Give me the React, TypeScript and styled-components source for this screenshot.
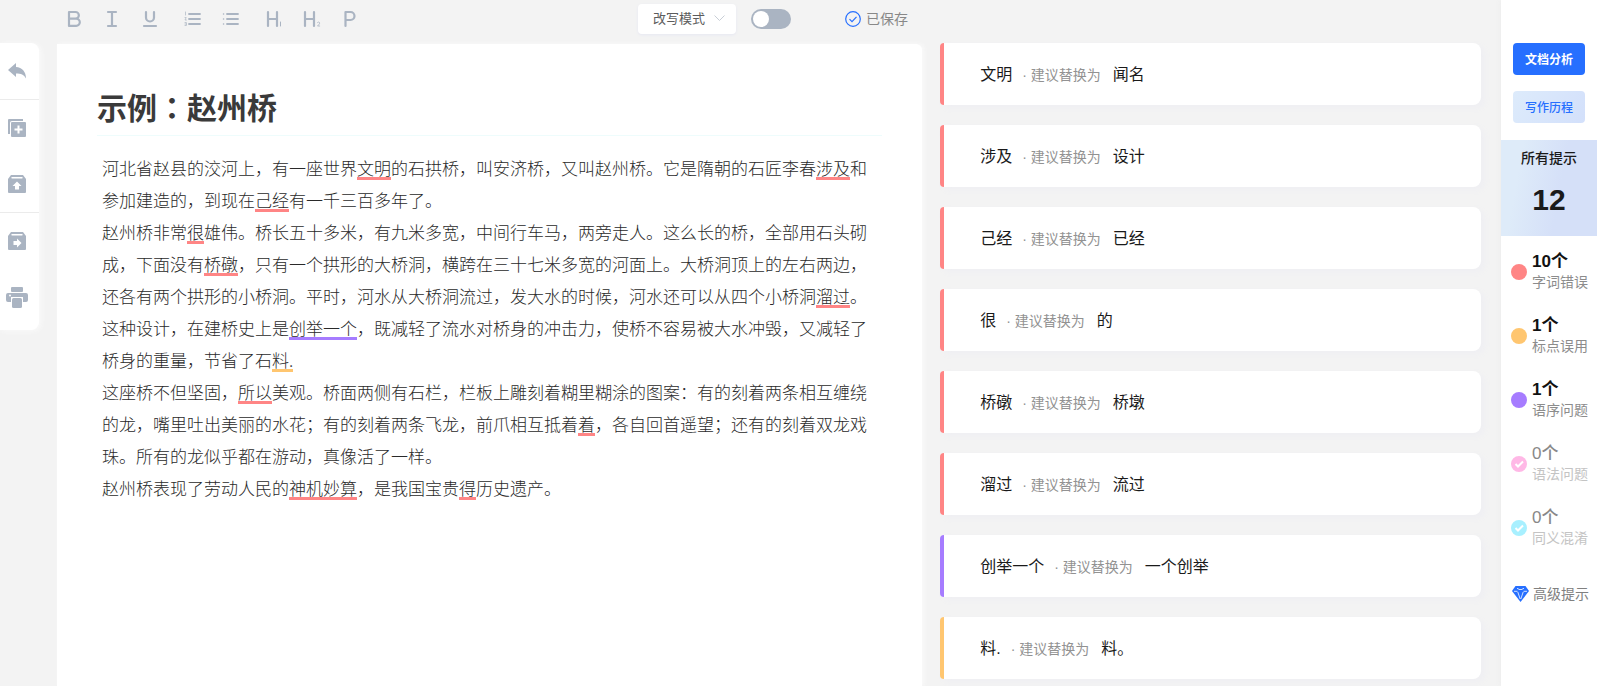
import React from 'react';
import styled, { createGlobalStyle, css } from 'styled-components';

const colors = {
  red: '#ff8585',
  orange: '#ffc670',
  purple: '#a67cff',
  pink: '#ffb8e6',
  cyan: '#a8f0ff',
  blue: '#266fff',
  icon: '#aab4c2',
};

const GlobalStyle = createGlobalStyle`
  * { box-sizing: border-box; }
  body {
    margin: 0;
    background: #f3f3f3;
    font-family: "Liberation Sans", "Noto Sans CJK SC", sans-serif;
  }
  button, select { font-family: inherit; }
  h1, h2, p, ul { margin: 0; padding: 0; }
  ul { list-style: none; }
`;

const Page = styled.div`
  display: flex;
  height: 100vh;
  overflow: hidden;
`;

const Workspace = styled.div`
  flex: 1;
  min-width: 0;
  display: flex;
  flex-direction: column;
`;

const Toolbar = styled.header`
  display: flex;
  align-items: center;
  height: 43px;
  padding-bottom: 6px;
  flex: none;
`;

const Formatting = styled.div`
  flex: 0 0 42.5%;
  display: flex;
  gap: 5px;
  padding-left: 55px;
`;

const ToolGroup = styled.div`
  display: flex;
`;

const ToolButton = styled.button`
  display: flex;
  align-items: center;
  justify-content: center;
  width: 38px;
  height: 32px;
  padding: 0;
  border: 0;
  background: none;
  color: ${colors.icon};
  cursor: pointer;
`;

const ModeBox = styled.div`
  display: flex;
  align-items: center;
  position: relative;
  margin-right: 15px;
`;

const ModeSelect = styled.select`
  appearance: none;
  width: 98px;
  height: 30px;
  padding: 0 28px 0 15px;
  border: 0;
  border-radius: 4px;
  background: #fff;
  box-shadow: 0 1px 3px #e6e8f2;
  color: #5c5c5c;
  font-size: 13px;
`;

const Chevron = styled.svg`
  position: absolute;
  right: 11px;
  pointer-events: none;
`;

const Toggle = styled.input`
  appearance: none;
  display: flex;
  align-items: center;
  width: 40px;
  height: 20px;
  margin: 0 54px 0 0;
  padding: 2px;
  border-radius: 10px;
  background: ${colors.icon};
  cursor: pointer;
  &::before {
    content: '';
    width: 16px;
    height: 16px;
    border-radius: 50%;
    background: #fff;
  }
  &:checked {
    justify-content: flex-end;
    background: ${colors.blue};
  }
`;

const SaveState = styled.div`
  display: flex;
  align-items: center;
  gap: 5px;
  color: #888;
  font-size: 14px;
  line-height: 20px;
`;

const Columns = styled.div`
  flex: 1;
  min-height: 0;
  display: flex;
`;

const Rail = styled.nav`
  align-self: flex-start;
  flex: none;
  width: 39px;
  margin-right: 18px;
  padding-bottom: 5px;
  border-radius: 0 8px 8px 0;
  background: #fff;
  box-shadow: 2px 1px 5px #fafafa;
`;

const RailGroup = styled.div`
  display: flex;
  flex-direction: column;
  & + & { border-top: 1px solid #ebebeb; }
`;

const RailButton = styled.button`
  display: flex;
  align-items: center;
  justify-content: center;
  width: 34px;
  height: 56px;
  padding: 0;
  border: 0;
  background: none;
  color: ${colors.icon};
  cursor: pointer;
`;

const Content = styled.main`
  flex: 1;
  min-width: 0;
  display: grid;
  grid-template-columns: 8fr 5fr;
  gap: 18px;
  padding-right: 20px;
`;

const Editor = styled.article`
  margin-top: 1px;
  padding: 40px;
  background: #fff;
  border-radius: 0 6px 0 0;
  box-shadow: 2px 0 4px #fafafa;
`;

const Title = styled.h1`
  padding-bottom: 4px;
  border-bottom: 1px solid #eefcfc;
  color: #3a3a3a;
  font-size: 30px;
  line-height: 44px;
`;

const Colon = styled.span`
  font-family: "Noto Sans CJK TC", sans-serif;
`;

const Body = styled.div`
  padding: 16px 5px;
  color: #2a2a2a;
  font-family: "Noto Sans CJK SC", sans-serif;
  font-weight: 300;
  font-size: 17px;
  line-height: 32px;
`;

const Mark = styled.mark<{ $color: string }>`
  background: linear-gradient(${(p) => p.$color}, ${(p) => p.$color}) no-repeat 0 100% / 100% 3px;
  color: inherit;
`;

const Suggestions = styled.ul`
  display: flex;
  flex-direction: column;
  gap: 20px;
  min-width: 0;
`;

const Card = styled.li<{ $color: string }>`
  flex: none;
  display: flex;
  align-items: center;
  height: 62px;
  padding: 2px 0 0 36px;
  border-left: 4px solid ${(p) => p.$color};
  border-radius: 4px 8px 8px 4px;
  background: #fff;
  box-shadow: 4px 3px 6px #efeff3;
  color: #1a1a1a;
  font-size: 16px;
  line-height: 24px;
`;

const Hint = styled.span`
  margin: 0 12px 0 10px;
  color: #929292;
  font-size: 14px;
`;

const Sidebar = styled.aside`
  flex: none;
  width: 96px;
  padding-top: 43px;
  background: #fff;
  box-shadow: 0 0 6px #ebebeb;
`;

const Actions = styled.div`
  display: flex;
  flex-direction: column;
  align-items: center;
  gap: 16px;
  padding-bottom: 17px;
`;

const ActionButton = styled.button<{ $primary?: boolean }>`
  width: 72px;
  height: 32px;
  padding: 0 0 2px;
  border: 0;
  border-radius: 4px;
  font-size: 12px;
  cursor: pointer;
  ${(p) =>
    p.$primary
      ? css`
          background: ${colors.blue};
          color: #fff;
          font-weight: 700;
        `
      : css`
          background: linear-gradient(120deg, #ddebfb, #d3e0fb);
          color: ${colors.blue};
          font-weight: 500;
        `}
`;

const Total = styled.section`
  height: 96px;
  padding-top: 8px;
  background: linear-gradient(100deg, #deebf9 20%, #d5e0f8 60%);
  color: #1a1a1a;
  text-align: center;
`;

const TotalLabel = styled.h2`
  font-size: 14px;
  font-weight: 500;
  line-height: 20px;
`;

const TotalCount = styled.p`
  padding-top: 12px;
  font-size: 30px;
  font-weight: 700;
  line-height: 40px;
`;

const Stats = styled.ul`
  padding-top: 4px;
`;

const Stat = styled.li<{ $muted: boolean }>`
  display: flex;
  align-items: center;
  gap: 5px;
  height: 64px;
  padding-left: 10px;
  color: ${(p) => (p.$muted ? '#c4c4c4' : '#8c8c8c')};
  font-size: 14px;
  line-height: 20px;
  white-space: nowrap;
`;

const Count = styled.div<{ $muted: boolean }>`
  color: ${(p) => (p.$muted ? '#888' : '#111')};
  font-size: 17px;
  font-weight: ${(p) => (p.$muted ? 500 : 700)};
`;

const Advanced = styled.a`
  display: flex;
  align-items: center;
  gap: 4px;
  margin-top: 24px;
  padding-left: 11px;
  color: #808080;
  font-size: 14px;
  line-height: 20px;
  text-decoration: none;
  white-space: nowrap;
`;

const stroke = {
  fill: 'none',
  stroke: 'currentColor',
  strokeWidth: 2.2,
  strokeLinecap: 'round' as const,
  strokeLinejoin: 'round' as const,
};

const BoldIcon = () => (
  <svg width="16" height="18" viewBox="0 0 16 18" {...stroke}>
    <path d="M3 2h6.500a3.300 3.300 0 0 1 0 6.700H3zM3 8.700h7.200a3.600 3.600 0 0 1 0 7.200H3z" />
  </svg>
);
const ItalicIcon = () => (
  <svg width="16" height="18" viewBox="0 0 16 18" {...stroke}>
    <path d="M4 2h8M8 2v14M4 16h8" />
  </svg>
);
const UnderlineIcon = () => (
  <svg width="16" height="18" viewBox="0 0 16 18" {...stroke}>
    <path d="M4 2v5.500a4 4 0 0 0 8 0V2M2 16h12" />
  </svg>
);
const ListLines = () => <path d="M5 4h11M5 9h11M5 14h11" strokeWidth="1.800" />;
const OrderedIcon = () => (
  <svg width="18" height="18" viewBox="0 0 18 18" {...stroke}>
    <ListLines />
    <path d="M1.500 2v3M1 7.500h1.200L1 10h1.400M1 12.500h1.400v3H1M1 14h1.200" strokeWidth=".7" />
  </svg>
);
const BulletIcon = () => (
  <svg width="18" height="18" viewBox="0 0 18 18" {...stroke}>
    <ListLines />
    <path d="M1.500 4h.1M1.500 9h.1M1.500 14h.1" strokeWidth="1.500" />
  </svg>
);
const Heading1Icon = () => (
  <svg width="18" height="18" viewBox="0 0 18 18" {...stroke}>
    <path d="M3 2v14M12 2v14M3 9h9" />
    <path d="M15.500 12v4" strokeWidth="1" />
  </svg>
);
const Heading2Icon = () => (
  <svg width="18" height="18" viewBox="0 0 18 18" {...stroke}>
    <path d="M2 2v14M11 2v14M2 9h9" />
    <path d="M14.500 12.500q1-1 2 0t-2 3.500h2.200" strokeWidth=".8" />
  </svg>
);
const ParagraphIcon = () => (
  <svg width="16" height="18" viewBox="0 0 16 18" {...stroke}>
    <path d="M3.500 16V2h5a4 4 0 0 1 0 8h-5" />
  </svg>
);

const UndoIcon = () => (
  <svg width="20" height="18" viewBox="0 0 20 18" fill="currentColor">
    <path d="M1 8 9 1v4c6 .4 10 4.500 10 11.500-2-4-5-5-10-5v3.500z" />
  </svg>
);
const CopyAddIcon = () => (
  <svg width="18" height="18" viewBox="0 0 18 18">
    <path d="M15 0v2H4a2 2 0 0 0-2 2v11H0V1q0-1 1-1z" fill="currentColor" />
    <rect x="3" y="3" width="15" height="15" rx="1" fill="currentColor" />
    <path d="M10.500 6.500v8M6.500 10.500h8" stroke="#fff" strokeWidth="2" />
  </svg>
);
const BoxIcon = ({ right }: { right?: boolean }) => (
  <svg width="18" height="18" viewBox="0 0 18 18">
    <path d="M3 0h12l3 4v13q0 1-1 1H1q-1 0-1-1V4z" fill="currentColor" />
    <path d="M4 2.800h10" stroke="#fff" strokeWidth="1.400" strokeLinecap="round" />
    <path
      d="M9 6.500 13.500 11H11v3.500H7V11H4.500z"
      fill="#fff"
      transform={right ? 'rotate(90 9 11)' : undefined}
    />
  </svg>
);
const PrinterIcon = () => (
  <svg width="22" height="21" viewBox="0 0 22 21" fill="currentColor">
    <rect x="5" y="0" width="12" height="5" rx="1" />
    <path d="M2 6h18q2 0 2 2v5q0 2-2 2h-3v-5H5v5H2q-2 0-2-2V8q0-2 2-2z" />
    <rect x="6" y="11" width="10" height="10" rx="1.500" />
    <circle cx="4" cy="8.500" r="1" fill="#fff" />
  </svg>
);
const SavedIcon = () => (
  <svg width="16" height="16" viewBox="0 0 16 16" fill="none" stroke={colors.blue} strokeWidth="1.200">
    <circle cx="8" cy="8" r="7.300" />
    <path d="m4.500 8.200 2.500 2.500 4.500-4.900" />
  </svg>
);
const StatusDot = ({ color, checked }: { color: string; checked: boolean }) => (
  <svg width="16" height="16" viewBox="0 0 16 16">
    <circle cx="8" cy="8" r="8" fill={color} />
    {checked && <path d="m4.500 8 2.500 2.500 5-5" fill="none" stroke="#fff" strokeWidth="2" />}
  </svg>
);
const DiamondIcon = () => (
  <svg width="17" height="16" viewBox="0 0 17 16">
    <path d="M3.500 0h10L17 5 8.500 16 0 5z" fill={colors.blue} />
    <path d="M2 5.300h3.500M11.500 5.300H15M5.800 6l2.400 7M11.200 6l-2.400 7M5 2.300l2 1M12 2.300l-2 1M7 3.500h3" fill="none" stroke="#fff" strokeWidth=".8" />
  </svg>
);

const R = ({ children }: { children: string }) => <Mark $color={colors.red}>{children}</Mark>;

const suggestions = [
  ['文明', '闻名', colors.red],
  ['涉及', '设计', colors.red],
  ['己经', '已经', colors.red],
  ['很', '的', colors.red],
  ['桥礅', '桥墩', colors.red],
  ['溜过', '流过', colors.red],
  ['创举一个', '一个创举', colors.purple],
  ['料.', '料。', colors.orange],
];

const stats = [
  { count: 10, label: '字词错误', color: colors.red },
  { count: 1, label: '标点误用', color: colors.orange },
  { count: 1, label: '语序问题', color: colors.purple },
  { count: 0, label: '语法问题', color: colors.pink },
  { count: 0, label: '同义混淆', color: colors.cyan },
];

export default function App() {
  return (
    <Page lang="zh-CN">
      <GlobalStyle />
      <Workspace>
        <Toolbar>
          <Formatting>
            <ToolGroup>
              <ToolButton aria-label="加粗"><BoldIcon /></ToolButton>
              <ToolButton aria-label="斜体"><ItalicIcon /></ToolButton>
              <ToolButton aria-label="下划线"><UnderlineIcon /></ToolButton>
            </ToolGroup>
            <ToolGroup>
              <ToolButton aria-label="有序列表"><OrderedIcon /></ToolButton>
              <ToolButton aria-label="无序列表"><BulletIcon /></ToolButton>
            </ToolGroup>
            <ToolGroup>
              <ToolButton aria-label="一级标题"><Heading1Icon /></ToolButton>
              <ToolButton aria-label="二级标题"><Heading2Icon /></ToolButton>
              <ToolButton aria-label="正文"><ParagraphIcon /></ToolButton>
            </ToolGroup>
          </Formatting>
          <ModeBox>
            <ModeSelect aria-label="模式">
              <option>改写模式</option>
            </ModeSelect>
            <Chevron width="11" height="7" viewBox="0 0 11 7" fill="none" stroke="#c8ced6">
              <path d="m.5.500 5 5 5-5" />
            </Chevron>
          </ModeBox>
          <Toggle type="checkbox" role="switch" aria-label="启用改写" />
          <SaveState role="status"><SavedIcon />已保存</SaveState>
        </Toolbar>
        <Columns>
          <Rail aria-label="文档操作">
            <RailGroup>
              <RailButton aria-label="撤销"><UndoIcon /></RailButton>
            </RailGroup>
            <RailGroup>
              <RailButton aria-label="新建"><CopyAddIcon /></RailButton>
              <RailButton aria-label="导入"><BoxIcon /></RailButton>
            </RailGroup>
            <RailGroup>
              <RailButton aria-label="导出"><BoxIcon right /></RailButton>
              <RailButton aria-label="打印"><PrinterIcon /></RailButton>
            </RailGroup>
          </Rail>
          <Content>
            <Editor>
              <Title>示例<Colon lang="zh-TW">：</Colon>赵州桥</Title>
              <Body>
                <p>
                  河北省赵县的洨河上，有一座世界<R>文明</R>的石拱桥，叫安济桥，又叫赵州桥。它是隋朝的石匠李春<R>涉及</R>和参加建造的，到现在<R>己经</R>有一千三百多年了。
                </p>
                <p>
                  赵州桥非常<R>很</R>雄伟。桥长五十多米，有九米多宽，中间行车马，两旁走人。这么长的桥，全部用石头砌成，下面没有<R>桥礅</R>，只有一个拱形的大桥洞，横跨在三十七米多宽的河面上。大桥洞顶上的左右两边，还各有两个拱形的小桥洞。平时，河水从大桥洞流过，发大水的时候，河水还可以从四个小桥洞<R>溜过</R>。这种设计，在建桥史上是<Mark $color={colors.purple}>创举一个</Mark>，既减轻了流水对桥身的冲击力，使桥不容易被大水冲毁，又减轻了桥身的重量，节省了石<Mark $color={colors.orange}>料.</Mark>
                </p>
                <p>
                  这座桥不但坚固，<R>所以</R>美观。桥面两侧有石栏，栏板上雕刻着糊里糊涂的图案：有的刻着两条相互缠绕的龙，嘴里吐出美丽的水花；有的刻着两条飞龙，前爪相互抵着<R>着</R>，各自回首遥望；还有的刻着双龙戏珠。所有的龙似乎都在游动，真像活了一样。
                </p>
                <p>
                  赵州桥表现了劳动人民的<R>神机妙算</R>，是我国宝贵<R>得</R>历史遗产。
                </p>
              </Body>
            </Editor>
            <Suggestions>
              {suggestions.map(([from, to, color]) => (
                <Card key={from} $color={color}>
                  <span>{from}</span>
                  <Hint>· 建议替换为</Hint>
                  <span>{to}</span>
                </Card>
              ))}
            </Suggestions>
          </Content>
        </Columns>
      </Workspace>
      <Sidebar>
        <Actions>
          <ActionButton $primary>文档分析</ActionButton>
          <ActionButton>写作历程</ActionButton>
        </Actions>
        <Total>
          <TotalLabel>所有提示</TotalLabel>
          <TotalCount>12</TotalCount>
        </Total>
        <Stats>
          {stats.map(({ count, label, color }) => (
            <Stat key={label} $muted={count === 0}>
              <StatusDot color={color} checked={count === 0} />
              <div>
                <Count $muted={count === 0}>{count}个</Count>
                <div>{label}</div>
              </div>
            </Stat>
          ))}
        </Stats>
        <Advanced href="#advanced"><DiamondIcon />高级提示</Advanced>
      </Sidebar>
    </Page>
  );
}
